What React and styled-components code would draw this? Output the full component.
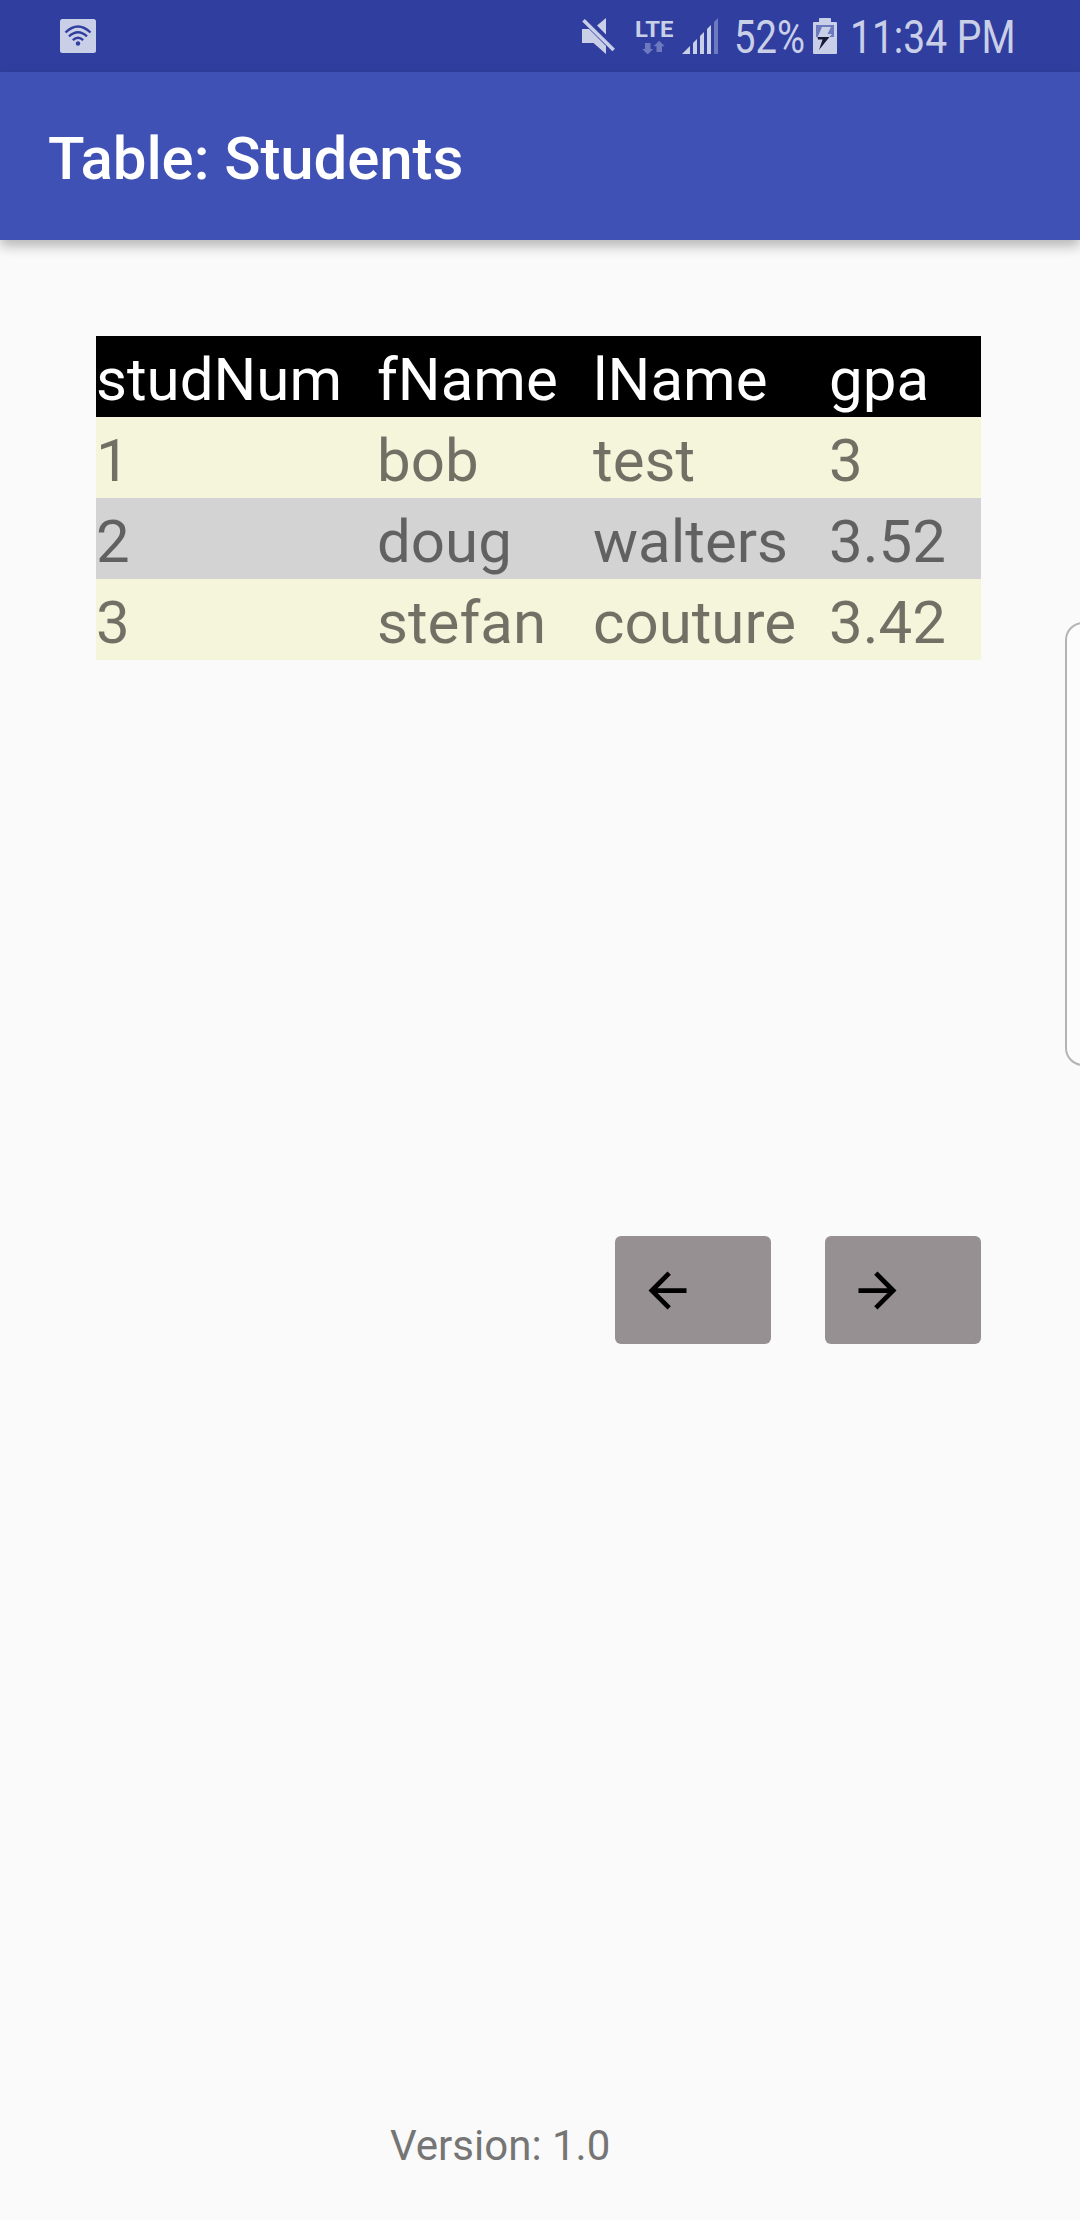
import React from "react";
import styled, { createGlobalStyle } from "styled-components";

const INK = "#cacfe8";
const DIM = "#6e7abf";

const GlobalStyle = createGlobalStyle`
  * { box-sizing: border-box; }
  body { margin: 0; background: #fafafa; font-family: Roboto, sans-serif; }
`;

const Screen = styled.div`
  position: relative;
  display: flex;
  flex-direction: column;
  width: 1080px;
  height: 2220px;
  overflow: hidden;
  background: #fafafa;
`;

const StatusBar = styled.header`
  display: flex;
  align-items: flex-start;
  height: 72px;
  flex: none;
  padding: 18px 64px 0 60px;
  background: #303f9f;
  color: ${INK};
`;

const Icon = styled.svg`
  display: block;
  flex: none;
  margin-left: ${(p) => p.$gap || 0}px;
`;

const Spacer = styled.div`
  flex: 1;
`;

const Network = styled.div`
  display: flex;
  flex-direction: column;
  width: 39px;
  margin-left: 20px;
`;

const NetworkType = styled.span`
  height: 22px;
  font-size: 22.5px;
  line-height: 22px;
  font-weight: 700;
`;

const StatusText = styled.span`
  width: ${(p) => p.$width}px;
  height: 36px;
  margin-left: ${(p) => p.$gap}px;
  font-size: 46px;
  line-height: 38px;
  white-space: nowrap;
`;

const Stretched = styled.span`
  display: inline-block;
  transform: scaleX(${(p) => p.$ratio});
  transform-origin: left;
`;

const AppBar = styled.div`
  display: flex;
  align-items: center;
  flex: none;
  height: 168px;
  padding: 5px 48px 0;
  background: #3f51b5;
  box-shadow: 0 6px 12px rgba(0, 0, 0, 0.28);
`;

const Title = styled.h1`
  margin: 0;
  font-size: 60px;
  font-weight: 500;
  line-height: 71px;
  letter-spacing: -0.1px;
  color: #fff;
`;

const Content = styled.main`
  display: flex;
  flex-direction: column;
  flex: 1;
  padding: 96px 99px 0 96px;
`;

const TableArea = styled.section`
  height: 900px;
`;

const Table = styled.div`
  display: flex;
  flex-direction: column;
`;

const rowColors = { head: "#000", odd: "#f5f5dc", even: "#d3d3d3" };

const Row = styled.div`
  display: grid;
  grid-template-columns: 281px 216px 236px 1fr;
  height: 81px;
  padding-top: 6px;
  background: ${(p) => rowColors[p.$kind]};
  color: ${(p) => (p.$kind === "head" ? "#fff" : "rgba(0, 0, 0, 0.54)")};
`;

const Cell = styled.span`
  font-size: 60px;
  line-height: 75px;
`;

const Pager = styled.div`
  display: flex;
  justify-content: flex-end;
  gap: 54px;
`;

const PageButton = styled.button`
  display: flex;
  align-items: center;
  width: 156px;
  height: 108px;
  padding: 0 24px;
  border: 0;
  border-radius: 6px;
  background: #979092;
`;

const Version = styled.footer`
  margin-top: auto;
  padding: 0 0 49px 294px;
  font-size: 42px;
  line-height: 50px;
  color: #757575;
`;

const EdgeHandle = styled.div`
  position: absolute;
  top: 622px;
  right: -21px;
  width: 36px;
  height: 444px;
  border: 2px solid #b4b4b4;
  border-radius: 20px;
  background: #fcfcfc;
`;

const students = [
  ["1", "bob", "test", "3"],
  ["2", "doug", "walters", "3.52"],
  ["3", "stefan", "couture", "3.42"],
];

function WifiIcon() {
  return (
    <Icon width="36" height="36" viewBox="60 18 36 36">
      <rect x="60" y="19" width="36" height="34" rx="2.5" fill={INK} />
      <g fill="none" stroke="#303f9f" strokeWidth="2.4">
        <path d="M65.5 32.5Q78 20.5 90.5 32.5" />
        <path d="M69 36.3Q78 28 87 36.3" />
        <path d="M72.8 40.2Q78 35.4 83.2 40.2" />
      </g>
      <circle cx="78" cy="43.5" r="2.2" fill="#303f9f" />
    </Icon>
  );
}

function MuteIcon() {
  return (
    <Icon width="34" height="36" viewBox="580 18 34 36">
      <path d="M581 29H588L605 46V54L592.5 43H581ZM605 18V34.5L596 25.5Z" fill={INK} />
      <path d="M582.5 20L613 50.5" stroke="#303f9f" strokeWidth="5" transform="translate(1.5 -2)" />
      <path d="M582.5 20.2L612.7 50" stroke={INK} strokeWidth="3.6" />
    </Icon>
  );
}

function DataArrows() {
  return (
    <Icon $gap={7} width="24" height="14" viewBox="642 40 24 14">
      <path d="M645 43H650.5V49H653.2L647.7 54.5L642.2 49H645Z" fill={DIM} />
      <path d="M656.5 52H662V46.3H664.7L659.2 40.7L653.7 46.3H656.5Z" fill={DIM} />
    </Icon>
  );
}

function SignalIcon() {
  return (
    <Icon $gap={8} width="37" height="36" viewBox="682 18 37 36">
      <g fill={INK}>
        <path d="M682 54L690 46V54Z" />
        <path d="M693 54V43L697 39V54Z" />
        <path d="M700 54V36L704 32V54Z" />
        <path d="M707 54V29L711 25V54Z" />
      </g>
      <path d="M714 54V22L718 18V54Z" fill={DIM} />
    </Icon>
  );
}

function BatteryIcon() {
  return (
    <Icon $gap={9} width="24" height="36" viewBox="813 18 24 36">
      <path d="M819 22V19Q819 18 820 18H830Q831 18 831 19V22H836Q837 22 837 23V53Q837 54 836 54H814Q813 54 813 53V23Q813 22 814 22Z" fill={INK} />
      <rect x="816" y="25" width="18" height="12" fill={DIM} />
      <path d="M822 27H831L827.5 34H832L829 37.5H817.5Z" fill={INK} />
      <path d="M817.5 37H829.5L819 50L822.5 39.5H818Z" fill="#171b38" />
    </Icon>
  );
}

const arrows = {
  back: "M20 11H7.83l5.59-5.59L12 4l-8 8 8 8 1.41-1.41L7.83 13H20v-2z",
  forward: "M12 4l-1.41 1.41L16.17 11H4v2h12.17l-5.58 5.59L12 20l8-8z",
};

function ArrowIcon({ direction }) {
  return (
    <Icon width="57" height="57" viewBox="0 0 24 24">
      <path d={arrows[direction]} />
    </Icon>
  );
}

function TableRow({ kind, values }) {
  return (
    <Row $kind={kind}>
      {values.map((value, i) => (
        <Cell key={i}>{value}</Cell>
      ))}
    </Row>
  );
}

export default function App() {
  return (
    <Screen>
      <GlobalStyle />
      <StatusBar>
        <WifiIcon />
        <Spacer />
        <MuteIcon />
        <Network>
          <NetworkType>
            <Stretched $ratio={1.06}>LTE</Stretched>
          </NetworkType>
          <DataArrows />
        </Network>
        <SignalIcon />
        <StatusText $gap={15} $width={70}>
          <Stretched $ratio={0.83}>52%</Stretched>
        </StatusText>
        <BatteryIcon />
        <StatusText $gap={13} $width={166}>
          <Stretched $ratio={0.848}>11:34 PM</Stretched>
        </StatusText>
      </StatusBar>
      <AppBar>
        <Title>Table: Students</Title>
      </AppBar>
      <Content>
        <TableArea>
          <Table>
            <TableRow kind="head" values={["studNum", "fName", "lName", "gpa"]} />
            {students.map((student, i) => (
              <TableRow key={student[0]} kind={i % 2 ? "even" : "odd"} values={student} />
            ))}
          </Table>
        </TableArea>
        <Pager>
          <PageButton aria-label="Previous">
            <ArrowIcon direction="back" />
          </PageButton>
          <PageButton aria-label="Next">
            <ArrowIcon direction="forward" />
          </PageButton>
        </Pager>
        <Version>Version: 1.0</Version>
      </Content>
      <EdgeHandle />
    </Screen>
  );
}
